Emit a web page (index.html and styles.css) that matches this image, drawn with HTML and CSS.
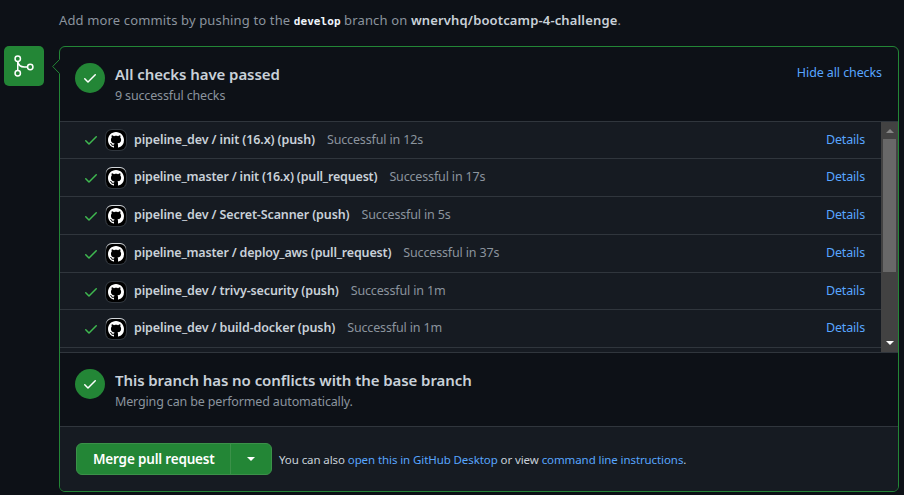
FILE: index.html
```html
<!DOCTYPE html>
<html lang="en">
<head>
<meta charset="utf-8">
<title>Merge pull request</title>
<link rel="stylesheet" href="styles.css">
</head>
<body>
<svg class="defs" aria-hidden="true">
  <symbol id="check" viewBox="0 0 16 16"><path d="M13.78 4.22a.75.75 0 0 1 0 1.06l-7.25 7.25a.75.75 0 0 1-1.06 0L2.22 9.28a.75.75 0 0 1 1.06-1.06L6 10.94l6.72-6.72a.75.75 0 0 1 1.06 0Z"/></symbol>
  <symbol id="mark" viewBox="0 0 16 16"><path d="M8 0C3.58 0 0 3.58 0 8c0 3.54 2.29 6.53 5.47 7.59.4.07.55-.17.55-.38 0-.19-.01-.82-.01-1.49-2.01.37-2.53-.49-2.69-.94-.09-.23-.48-.94-.82-1.13-.28-.15-.68-.52-.01-.53.63-.01 1.08.58 1.23.82.72 1.21 1.87.87 2.33.66.07-.52.28-.87.51-1.07-1.78-.2-3.64-.89-3.64-3.95 0-.87.31-1.59.82-2.15-.08-.2-.36-1.02.08-2.12 0 0 .67-.21 2.2.82.64-.18 1.32-.27 2-.27s1.36.09 2 .27c1.53-1.04 2.2-.82 2.2-.82.44 1.1.16 1.92.08 2.12.51.56.82 1.27.82 2.15 0 3.07-1.87 3.75-3.65 3.95.29.25.54.73.54 1.48 0 1.07-.01 1.93-.01 2.2 0 .21.15.46.55.38A8.01 8.01 0 0 0 16 8c0-4.42-3.58-8-8-8Z"/></symbol>
</svg>
<p class="hint">Add more commits by pushing to the <code>develop</code> branch on <strong>wnervhq/bootcamp-4-challenge</strong>.</p>
<main class="merge">
  <div class="badge"><svg viewBox="0 0 24 24"><circle cx="5.75" cy="4.75" r="2.7"/><circle cx="5.75" cy="19.25" r="2.7"/><circle cx="18.25" cy="13" r="2.7"/><path d="M5.75 7.5v9M5.75 7.5c.6 3.3 3 5.5 6.5 5.5h3.2"/></svg></div>
  <section class="panel">
    <svg class="notch" viewBox="0 0 8 16"><path class="notch-fill" d="M8 0 .7 7.5 8 15Z"/><path class="notch-line" d="M7.5.5.7 7.5l6.8 7"/></svg>
    <header class="status">
      <span class="circle"><svg><use href="#check"/></svg></span>
      <div class="copy"><h2>All checks have passed</h2><p>9 successful checks</p></div>
      <a class="toggle">Hide all checks</a>
    </header>
    <div class="checks">
      <ul class="list">
        <li><svg class="tick"><use href="#check"/></svg><span class="avatar"><svg><use href="#mark"/></svg></span><strong>pipeline_dev / init (16.x) (push)</strong><span class="time">Successful in 12s</span><a>Details</a></li>
        <li class="master lit"><svg class="tick"><use href="#check"/></svg><span class="avatar"><svg><use href="#mark"/></svg></span><strong>pipeline_master / init (16.x) (pull_request)</strong><span class="time">Successful in 17s</span><a>Details</a></li>
        <li class="lit"><svg class="tick"><use href="#check"/></svg><span class="avatar"><svg><use href="#mark"/></svg></span><strong>pipeline_dev / Secret-Scanner (push)</strong><span class="time">Successful in 5s</span><a>Details</a></li>
        <li class="master lit"><svg class="tick"><use href="#check"/></svg><span class="avatar"><svg><use href="#mark"/></svg></span><strong>pipeline_master / deploy_aws (pull_request)</strong><span class="time">Successful in 37s</span><a>Details</a></li>
        <li><svg class="tick"><use href="#check"/></svg><span class="avatar"><svg><use href="#mark"/></svg></span><strong>pipeline_dev / trivy-security (push)</strong><span class="time">Successful in 1m</span><a>Details</a></li>
        <li class="lit"><svg class="tick"><use href="#check"/></svg><span class="avatar"><svg><use href="#mark"/></svg></span><strong>pipeline_dev / build-docker (push)</strong><span class="time">Successful in 1m</span><a>Details</a></li>
      </ul>
      <div class="scrollbar"><i class="up"></i><i class="thumb"></i><i class="down"></i></div>
    </div>
    <div class="status conflicts">
      <span class="circle"><svg><use href="#check"/></svg></span>
      <div class="copy"><h2>This branch has no conflicts with the base branch</h2><p>Merging can be performed automatically.</p></div>
    </div>
    <footer class="actions">
      <div class="button"><span class="label">Merge pull request</span><span class="more"><i></i></span></div>
      <p>You can also <a>open this in GitHub Desktop</a> or view <a>command line instructions</a>.</p>
    </footer>
  </section>
</main>
</body>
</html>
```

FILE: styles.css
```css
* { box-sizing: border-box; }
body { margin: 0; height: 495px; overflow: hidden; background: #0d1117; color: #c9d1d9; font: 13px/20px "Noto Sans", "Open Sans", sans-serif; }
h2, p, ul { margin: 0; padding: 0; }
strong { font-weight: 600; }
a { color: #58a6ff; }
.defs { display: none; }
.hint { height: 46px; padding: 10px 0 0 59px; color: #8b949e; white-space: nowrap; letter-spacing: .145px; }
.hint strong { color: #c9d1d9; }
.hint code { font: bold 11px/20px "DejaVu Sans Mono", monospace; letter-spacing: 0.05px; color: #f0f6fc; }
.merge { display: flex; gap: 15px; padding-left: 4px; }
.badge { width: 40px; height: 40px; border-radius: 5px; background: #238636; display: grid; place-items: center; }
.badge svg { width: 24px; height: 24px; fill: none; stroke: #fff; stroke-width: 1.5; }
.panel { position: relative; width: 840px; height: 446px; border: 1px solid #238636; border-radius: 6px; }
.notch { position: absolute; left: -8px; top: 12px; width: 8px; height: 16px; overflow: visible; }
.notch-fill { fill: #0d1117; }
.notch-line { fill: none; stroke: #238636; }
.status { display: flex; height: 74px; padding: 16px 16px 0 15px; }
.conflicts { height: 73px; }
.circle { width: 30px; height: 30px; border-radius: 50%; background: #238636; display: grid; place-items: center; }
.circle svg { width: 16px; height: 16px; fill: #fff; }
.copy { margin-left: 10px; flex: 1; white-space: nowrap; }
.copy h2 { font-size: 15px; line-height: 22px; font-weight: 600; letter-spacing: -.07px; }
.copy p { margin-top: 1px; color: #8b949e; font-size: 12.5px; letter-spacing: -.15px; }
.toggle { font-size: 12.5px; height: 20px; letter-spacing: -.1px; }
.checks { display: flex; height: 232px; border: solid #30363d; border-width: 1px 0; background: #161b22; }
.list { flex: 1; list-style: none; display: grid; grid-template-rows: 37px 38px 38px 38px 37px 38px; align-content: start; }
.list li { display: flex; align-items: flex-start; padding: 8px 16px 0 23px; border-bottom: 1px solid #30363d; white-space: nowrap; font-size: 12.5px; letter-spacing: -.12px; }
.tick { width: 16px; height: 16px; margin-top: 3px; fill: #3fb950; }
.avatar { width: 20px; height: 20px; margin: 1px 8px 0 7px; border-radius: 6px; background: #000; box-shadow: 0 0 0 1px #30363d; display: grid; place-items: center; }
.avatar svg { width: 16px; height: 16px; fill: #fff; }
.lit .avatar { box-shadow: 0 -1px 0 0 #d0d4d8, 0 0 0 1px #30363d; }
.list li:first-child .tick { margin-top: 2px; }
.list li:first-child .avatar { margin-top: 0; }
.master strong { letter-spacing: -.185px; }
.time { margin-left: 12px; color: #8b949e; letter-spacing: -.15px; }
.list a { margin-left: auto; letter-spacing: -.16px; }
.scrollbar { width: 17px; background: #424242; display: flex; flex-direction: column; align-items: center; }
.up, .down { border: solid transparent; border-width: 0 4px; }
.up { border-bottom: 4px solid #868686; margin-top: 7px; }
.thumb { width: 13px; height: 133px; margin-top: 6px; background: #686868; }
.down { border-top: 4px solid #fff; margin-top: 69px; }
.actions { display: flex; height: 65px; padding: 16px 0 0 16px; border-top: 1px solid #30363d; border-radius: 0 0 5px 5px; background: #161b22; white-space: nowrap; font-size: 11.5px; line-height: 33px; letter-spacing: -.09px; }
.button { display: flex; width: 196px; height: 32px; border: 1px solid #3b9149; border-radius: 6px; background: #238636; color: #fff; font-size: 13.5px; font-weight: 600; line-height: 30px; letter-spacing: -.18px; }
.label { width: 154px; padding-left: 16px; border-right: 1px solid #3b9149; }
.more { flex: 1; display: grid; place-items: center; }
.more i { border: 4px solid transparent; border-top-color: #fff; border-bottom: 0; }
.actions p { margin-left: 7px; }
```
